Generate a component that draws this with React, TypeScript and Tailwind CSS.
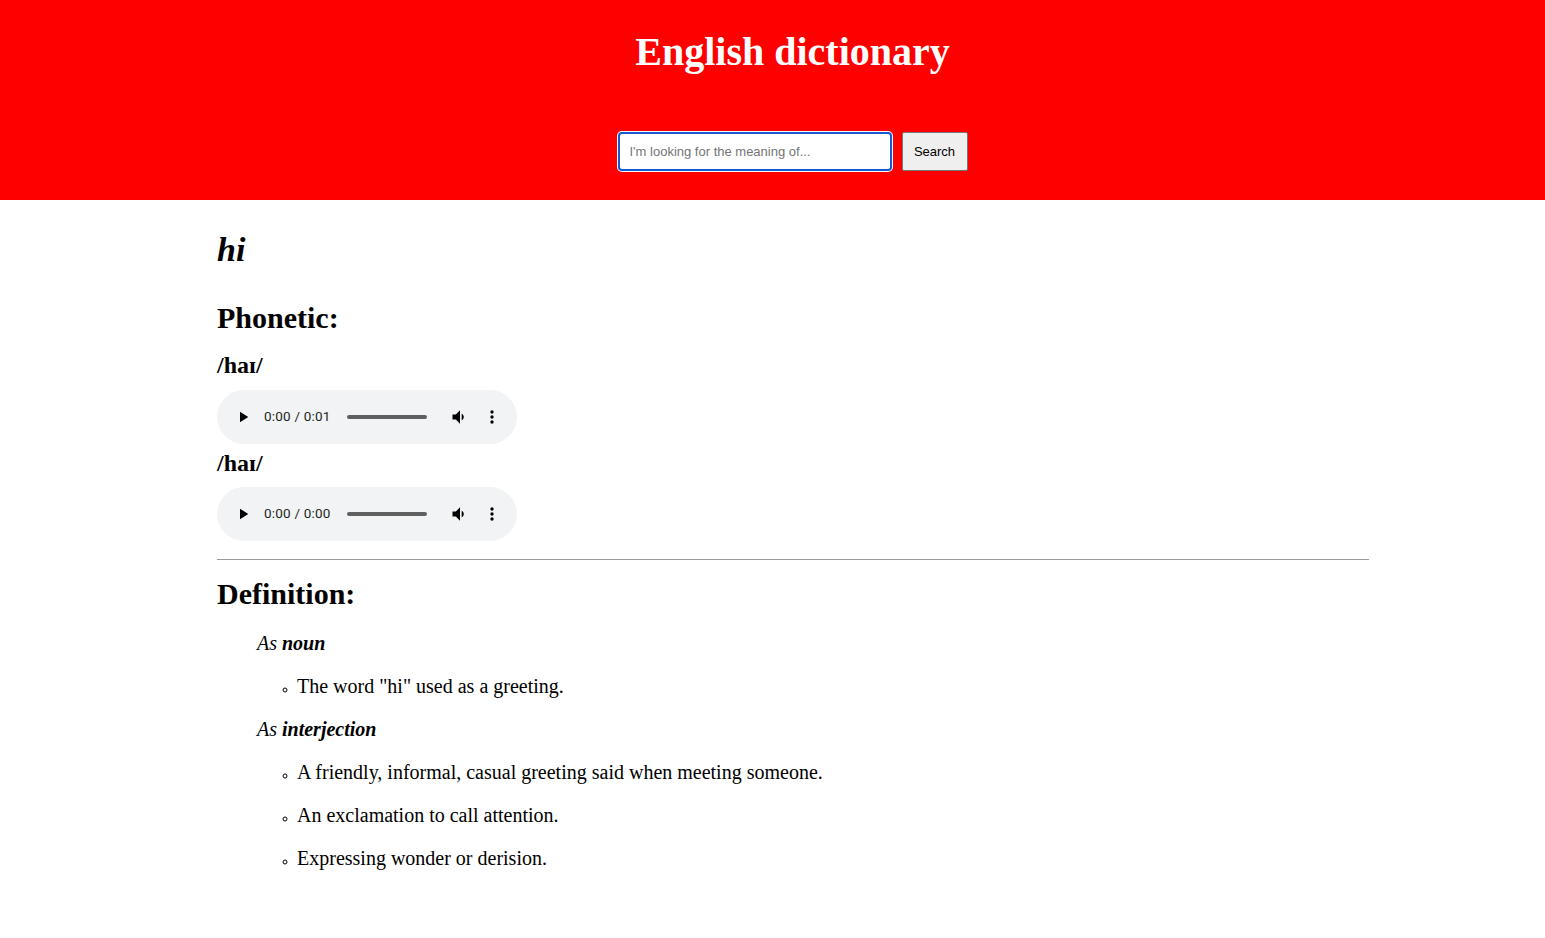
const serif = "font-['Liberation_Serif','Times_New_Roman',serif]";

const AudioBar = ({ total }: { total: string }) => (
  <div className="flex h-[54px] w-[300px] items-center rounded-[27px] bg-[#f1f3f4] text-[#1f1f1f]">
    <svg viewBox="0 0 24 24" className="ml-[17px] size-[18px] fill-black">
      <path d="M8 5v14l11-7z" />
    </svg>
    <span className="ml-[12px] font-['Roboto','Liberation_Sans',sans-serif] text-[13.5px] leading-none tracking-[0.2px]">
      0:00 / {total}
    </span>
    <div className="ml-[16px] h-[4px] w-[80px] rounded-full bg-[#5f5f5f]" />
    <svg viewBox="0 0 24 24" className="ml-[23px] size-[20px] fill-black">
      <path d="M3 9v6h4l5 5V4L7 9H3z" />
      <path d="M16.5 12c0-1.77-1.02-3.29-2.5-4.03v8.05c1.48-.73 2.5-2.25 2.5-4.02z" />
    </svg>
    <svg viewBox="0 0 24 24" className="ml-[12px] size-[20px] fill-black">
      <circle cx="12" cy="6" r="2" />
      <circle cx="12" cy="12" r="2" />
      <circle cx="12" cy="18" r="2" />
    </svg>
  </div>
);

const meanings = [
  { part: 'noun', defs: ['The word "hi" used as a greeting.'] },
  {
    part: 'interjection',
    defs: [
      'A friendly, informal, casual greeting said when meeting someone.',
      'An exclamation to call attention.',
      'Expressing wonder or derision.',
    ],
  },
];

export default function App() {
  return (
    <div className={`min-h-screen bg-white text-black ${serif}`}>
      <header className="flex h-[200px] flex-col items-center bg-[#ff0000] pl-10 pt-[29px]">
        <h1 className="text-[40px] font-bold leading-[46px] text-white">English dictionary</h1>
        <form className="mt-[57px] flex items-center gap-[10px]" onSubmit={e => e.preventDefault()}>
          <input
            type="text"
            placeholder="I'm looking for the meaning of..."
            className="h-[39px] w-[274px] rounded-[4px] border-2 border-[#1659d3] bg-white px-[10px] font-['Liberation_Sans',Arial,sans-serif] text-[13px] text-black shadow-[0_0_0_1px_#ffffff] outline-none placeholder:text-[#757575]"
          />
          <button
            type="submit"
            className="h-[39px] w-[66px] rounded-[2px] border border-[#767676] bg-[#efefef] font-['Liberation_Sans',Arial,sans-serif] text-[13px] text-black">
            Search
          </button>
        </form>
      </header>

      <main className="ml-[217px] w-[1152px] pb-16">
        <h2 className="mt-[30px] text-[34px] font-bold italic leading-[39px]">hi</h2>

        <h2 className="mt-[31px] text-[30px] font-bold leading-[35px]">Phonetic:</h2>
        <h3 className="mt-[16px] text-[24px] font-bold leading-[28px]">/haɪ/</h3>
        <div className="mt-[11px]">
          <AudioBar total="0:01" />
        </div>
        <h3 className="mt-[5px] text-[24px] font-bold leading-[28px]">/haɪ/</h3>
        <div className="mt-[10px]">
          <AudioBar total="0:00" />
        </div>

        <hr className="mt-[18px] border-0 border-t border-[#9a9a9a]" />

        <h2 className="mt-[16px] text-[30px] font-bold leading-[35px]">Definition:</h2>
        <div className="pl-10">
          {meanings.map((m, idx) => (
            <div key={m.part}>
              <p className={`${idx === 0 ? 'mt-[21px]' : 'mt-[20px]'} text-[20px] italic leading-[23px]`}>
                As <b>{m.part}</b>
              </p>
              <ul className="list-[circle] pl-10">
                {m.defs.map(d => (
                  <li key={d} className="mt-[20px] text-[20px] leading-[23px] marker:text-[12px]">
                    {d}
                  </li>
                ))}
              </ul>
            </div>
          ))}
        </div>
      </main>
    </div>
  );
}
